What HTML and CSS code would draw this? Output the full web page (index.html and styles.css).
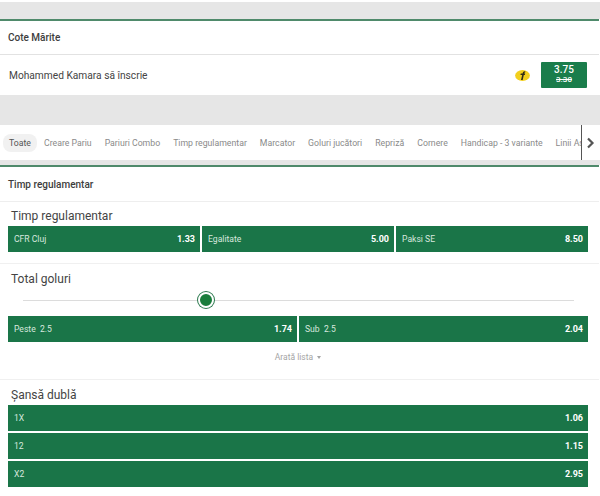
FILE: index.html
```html
<!DOCTYPE html>
<html lang="ro">
<head>
<meta charset="utf-8">
<title>Cote</title>
<link rel="stylesheet" href="styles.css">
</head>
<body>
<div class="page">
  <div class="gap gap-top"></div>
  <section class="card">
    <h2 class="card-title card-title-boost">Cote Mărite</h2>
    <div class="boost-row">
      <span class="boost-name">Mohammed Kamara să înscrie</span>
      <svg class="boost-icon" width="15" height="11" viewBox="0 0 15 11" aria-hidden="true">
        <ellipse cx="7.5" cy="5.5" rx="7.4" ry="5.4" fill="#f2cf1d"/>
        <path d="M6 10 L7.2 5 L5.4 5 L5.8 3.6 L7.6 3.6 C7.9 2 8.8 1.1 10.4 1.4 L10.1 2.6 C9.5 2.5 9.3 2.9 9.2 3.6 L10.2 3.6 L9.8 5 L8.8 5 L7.7 10 Z" fill="#2f2c18"/>
      </svg>
      <div class="boost-odds">
        <span class="odds-new">3.75</span>
        <span class="odds-old">3.30</span>
      </div>
    </div>
  </section>
  <div class="gap gap-mid"></div>
  <nav class="tabs">
    <div class="tab-list">
      <span class="tab tab-active">Toate</span>
      <span class="tab">Creare Pariu</span>
      <span class="tab">Pariuri Combo</span>
      <span class="tab">Timp regulamentar</span>
      <span class="tab">Marcator</span>
      <span class="tab">Goluri jucători</span>
      <span class="tab">Repriză</span>
      <span class="tab">Cornere</span>
      <span class="tab">Handicap - 3 variante</span>
      <span class="tab">Linii Asiatice</span>
    </div>
    <div class="tab-next">
      <svg width="9" height="12" viewBox="0 0 9 12" aria-hidden="true"><path d="M2 1.5 L6.5 6 L2 10.5" fill="none" stroke="#555" stroke-width="2.2"/></svg>
    </div>
  </nav>
  <div class="gap gap-small"></div>
  <section class="card">
    <h2 class="card-title card-title-main">Timp regulamentar</h2>
    <div class="market market-result">
      <h3 class="market-title">Timp regulamentar</h3>
      <div class="odds-row odds-row-three">
        <button class="bet"><span class="bet-label">CFR Cluj</span><span class="bet-price">1.33</span></button>
        <button class="bet"><span class="bet-label">Egalitate</span><span class="bet-price">5.00</span></button>
        <button class="bet"><span class="bet-label">Paksi SE</span><span class="bet-price">8.50</span></button>
      </div>
    </div>
    <div class="market market-goals">
      <h3 class="market-title">Total goluri</h3>
      <div class="slider"><span class="slider-knob"></span></div>
      <div class="odds-row odds-row-two">
        <button class="bet"><span class="bet-label">Peste&nbsp; 2.5</span><span class="bet-price">1.74</span></button>
        <button class="bet"><span class="bet-label">Sub&nbsp; 2.5</span><span class="bet-price">2.04</span></button>
      </div>
      <div class="show-list">Arată lista <span class="caret"></span></div>
    </div>
    <div class="market market-double">
      <h3 class="market-title">Șansă dublă</h3>
      <div class="odds-stack">
        <button class="bet"><span class="bet-label">1X</span><span class="bet-price">1.06</span></button>
        <button class="bet"><span class="bet-label">12</span><span class="bet-price">1.15</span></button>
        <button class="bet"><span class="bet-label">X2</span><span class="bet-price">2.95</span></button>
      </div>
    </div>
  </section>
</div>
</body>
</html>
```
FILE: styles.css
```css
* { box-sizing: border-box; }
html, body { margin: 0; padding: 0; background: #fff; }
body {
  width: 600px;
  height: 496px;
  overflow: hidden;
  font-family: Roboto, "Liberation Sans", sans-serif;
  color: #444;
}
.page { width: 600px; padding-top: 2px; }
.gap { background: #e6e6e6; }
.gap-top { height: 17px; }
.gap-mid { height: 30px; }
.gap-small { height: 5px; }
.card {
  border-top: 2px solid #4f8a6b;
  margin-right: 1px;
  background: #fff;
}
.card-title {
  margin: 0;
  font-size: 10px;
  font-weight: 500;
  color: #3d3d3d;
  border-bottom: 1px solid #e2e2e2;
  display: flex;
  align-items: center;
  padding-left: 8px;
}
.card-title-boost { height: 34px; }
.card-title-main { height: 35px; border-bottom-color: #eee; }
.boost-row {
  height: 40px;
  display: flex;
  align-items: center;
  padding: 0 12px 0 9px;
}
.boost-name { flex: 1; font-size: 10.2px; color: #444; }
.boost-icon { margin-right: 11px; }
.boost-odds {
  width: 46px;
  height: 26px;
  background: #1a7d4b;
  border-radius: 1px;
  color: #fff;
  display: flex;
  flex-direction: column;
  align-items: center;
  justify-content: center;
  line-height: 10px;
}
.odds-new { font-size: 10px; font-weight: 500; }
.odds-old { font-size: 8px; text-decoration: line-through; font-weight: 500; }
.tabs {
  height: 35px;
  display: flex;
  background: #fff;
  margin-right: 1px;
}
.tab-list {
  width: 582px;
  display: flex;
  align-items: center;
  gap: 13px;
  padding-left: 3px;
  overflow: hidden;
  white-space: nowrap;
  border-right: 1px solid #555;
}
.tab {
  font-size: 8.72px;
  color: #8a8a8a;
  flex: none;
}
.tab-active {
  color: #555;
  background: #f1f1f1;
  border-radius: 8px;
  padding: 4px 6px;
  margin-right: -6px;
}
.tab-next {
  flex: 1;
  display: flex;
  align-items: center;
  justify-content: center;
}
.market { padding: 0 11px 0 8px; }
.market-title {
  margin: 0;
  padding-left: 3px;
  font-size: 12px;
  font-weight: 400;
  line-height: 14px;
  color: #444;
}
.market-result {
  height: 62px;
  padding-top: 7px;
  border-bottom: 1px solid #f0f0f0;
}
.market-goals {
  height: 116px;
  padding-top: 8px;
  border-bottom: 1px solid #f0f0f0;
}
.market-double { padding-top: 8px; }
.market-result .market-title { margin-bottom: 3px; }
.market-double .market-title { margin-bottom: 3px; }
.odds-row { display: flex; gap: 2px; }
.odds-row > .bet { flex: 1; }
.odds-stack { display: flex; flex-direction: column; gap: 2px; }
.bet {
  height: 26px;
  border: 0;
  margin: 0;
  padding: 0 5px 0 6px;
  background: #1a7548;
  color: #fff;
  font-family: inherit;
  display: flex;
  align-items: center;
  justify-content: space-between;
}
.bet-label { font-size: 8.6px; color: #d8e8df; }
.bet-price { font-size: 9px; font-weight: 700; }
.slider {
  position: relative;
  height: 1px;
  margin: 14px 0 15px 15px;
  width: 551px;
  background: #dcdcdc;
}
.slider-knob {
  position: absolute;
  left: 175px;
  top: -8px;
  width: 16px;
  height: 16px;
  border-radius: 50%;
  background: #1a7d3c;
  border: 2px solid #fff;
  box-shadow: 0 0 0 1px #2d7a4f;
}
.show-list {
  margin-top: 9px;
  text-align: center;
  font-size: 8.5px;
  line-height: 12px;
  color: #a5a5a5;
}
.caret {
  display: inline-block;
  width: 0;
  height: 0;
  margin-left: 2px;
  vertical-align: 1px;
  border-left: 2px solid transparent;
  border-right: 2px solid transparent;
  border-top: 3px solid #a5a5a5;
}
```
